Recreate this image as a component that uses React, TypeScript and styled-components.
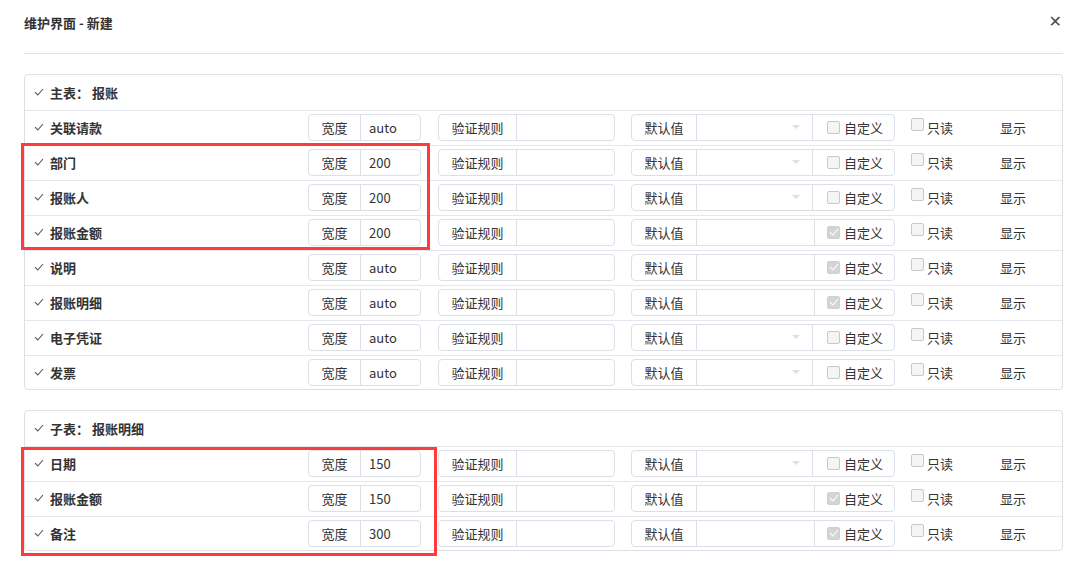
import styled, {createGlobalStyle} from "styled-components";

const GlobalStyle = createGlobalStyle`
  html, body {
    margin: 0;
    padding: 0;
    background: #fff;
  }
  body {
    font-family: "Noto Sans CJK SC", "Noto Sans", "Liberation Sans", sans-serif;
    font-size: 13px;
    color: #333;
  }
`

type FieldT = { name: string, width: string, custom: boolean }
type TableT = { title: string, fields: FieldT[], mark?: { top: number, height: number, width: number } }

const tables: TableT[] = [
    {
        title: "主表： 报账",
        mark: {top: 68, height: 107, width: 409},
        fields: [
            {name: "关联请款", width: "auto", custom: false},
            {name: "部门", width: "200", custom: false},
            {name: "报账人", width: "200", custom: false},
            {name: "报账金额", width: "200", custom: true},
            {name: "说明", width: "auto", custom: true},
            {name: "报账明细", width: "auto", custom: true},
            {name: "电子凭证", width: "auto", custom: false},
            {name: "发票", width: "auto", custom: false},
        ],
    },
    {
        title: "子表： 报账明细",
        mark: {top: 36, height: 109, width: 416},
        fields: [
            {name: "日期", width: "150", custom: false},
            {name: "报账金额", width: "150", custom: true},
            {name: "备注", width: "300", custom: true},
        ],
    },
]

const Page = styled.div`
  padding: 0 7px 0 24px;
`

const Header = styled.div`
  display: flex;
  align-items: center;
  justify-content: space-between;
  height: 44px;
  padding: 0 1px 9px 0;
  border-bottom: 1px solid #dcdfe6;
  margin-bottom: 20px;
`

const Title = styled.h1`
  margin: 0;
  font-size: 13px;
  font-weight: 700;
  color: #333;
`

const Close = styled.span`
  font-family: "DejaVu Sans", sans-serif;
  font-size: 16px;
  font-weight: 700;
  color: #4a4a4a;
  line-height: 1;
`

const Panel = styled.section`
  position: relative;
  border: 1px solid #dcdfe6;
  border-radius: 4px;
  margin-bottom: 20px;
`

const Row = styled.div<{ $last?: boolean }>`
  display: flex;
  align-items: center;
  height: 34px;
  padding-bottom: 1px;
  box-sizing: content-box;
  border-bottom: ${p => p.$last ? "none" : "1px solid #e4e7ed"};
  margin-bottom: -1px;
`

const Name = styled.div`
  display: flex;
  align-items: center;
  gap: 6px;
  width: 283px;
  padding-left: 9px;
  box-sizing: border-box;
  font-weight: 700;
  color: #333;
`

const Group = styled.div<{ $w: number }>`
  display: flex;
  width: ${p => p.$w}px;
  height: 27px;
  border: 1px solid #dcdfe6;
  border-radius: 4px;
  box-sizing: border-box;
  margin-right: 16px;
  overflow: hidden;
`

const Addon = styled.div<{ $w: number }>`
  display: flex;
  align-items: center;
  justify-content: center;
  width: ${p => p.$w}px;
  flex: none;
  border-right: 1px solid #dcdfe6;
  color: #333;
`

const Input = styled.div<{ $w?: number }>`
  display: flex;
  align-items: center;
  justify-content: space-between;
  flex: ${p => p.$w ? "none" : "1"};
  width: ${p => p.$w ? p.$w + "px" : "auto"};
  padding: 0 8px;
  box-sizing: border-box;
  border-right: ${p => p.$w ? "1px solid #dcdfe6" : "none"};
  color: #333;
`

const Caret = styled.span`
  width: 0;
  height: 0;
  margin-left: auto;
  margin-right: 4px;
  border-left: 4px solid transparent;
  border-right: 4px solid transparent;
  border-top: 4px solid #e0e0e0;
`

const CheckAddon = styled.label`
  display: flex;
  align-items: center;
  gap: 4px;
  flex: 1;
  padding-left: 14px;
  color: #333;
`

const Box = styled.span<{ $checked?: boolean }>`
  display: inline-flex;
  align-items: center;
  justify-content: center;
  width: 13px;
  height: 13px;
  box-sizing: border-box;
  border: 1px solid ${p => p.$checked ? "#d0d0d0" : "#c8c8c8"};
  border-radius: 2px;
  background: ${p => p.$checked ? "#d4d4d4" : "#f5f5f5"};
`

const ReadOnly = styled.label`
  display: flex;
  align-items: center;
  gap: 3px;
  width: 89px;
  color: #333;

  & > span {
    margin-top: -6px;
  }
`

const Show = styled.span`
  color: #333;
`

const Mark = styled.div`
  position: absolute;
  left: -4px;
  border: 3px solid #ff3b3b;
  box-sizing: border-box;
  pointer-events: none;
`

const Tick = ({color = "#555"}: { color?: string }) =>
    <svg width="10" height="8" viewBox="0 0 10 8">
        <path d="M1 4.2 L3.8 7 L9 1" fill="none" stroke={color} strokeWidth="1.1"/>
    </svg>

const Checkbox = ({checked}: { checked?: boolean }) =>
    <Box $checked={checked}>{checked && <Tick color="#fff"/>}</Box>

const FieldRow = ({f, last}: { f: FieldT, last: boolean }) =>
    <Row $last={last}>
        <Name><Tick/>{f.name}</Name>
        <Group $w={113} style={{marginRight: 17}}>
            <Addon $w={51}>宽度</Addon>
            <Input>{f.width}</Input>
        </Group>
        <Group $w={177}>
            <Addon $w={77}>验证规则</Addon>
            <Input/>
        </Group>
        <Group $w={264}>
            <Addon $w={64}>默认值</Addon>
            <Input $w={f.custom ? 118 : 116}>{!f.custom && <Caret/>}</Input>
            <CheckAddon style={f.custom ? {paddingLeft: 12} : undefined}>
                <Checkbox checked={f.custom}/>自定义
            </CheckAddon>
        </Group>
        <ReadOnly><Checkbox/>只读</ReadOnly>
        <Show>显示</Show>
    </Row>

const App = () => {
    return <Page>
        <GlobalStyle/>
        <Header>
            <Title>维护界面 - 新建</Title>
            <Close>✕</Close>
        </Header>
        {tables.map((t, ti) =>
            <Panel key={ti}>
                <Row>
                    <Name><Tick/>{t.title}</Name>
                </Row>
                {t.fields.map((f, i) =>
                    <FieldRow key={i} f={f} last={i === t.fields.length - 1}/>)}
                {t.mark && <Mark style={{top: t.mark.top, height: t.mark.height, width: t.mark.width}}/>}
            </Panel>)}
    </Page>
}

export default App
